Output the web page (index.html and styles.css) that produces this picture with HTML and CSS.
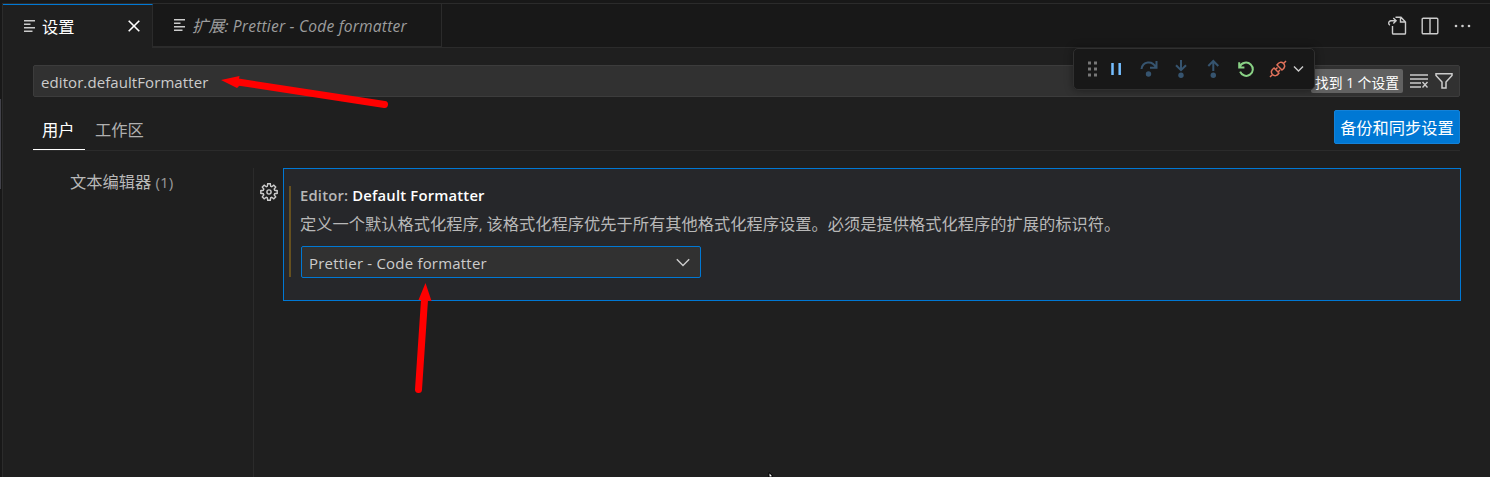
FILE: index.html
```html
<!DOCTYPE html>
<html lang="zh-CN">
<head>
<meta charset="utf-8">
<title>设置</title>
<link rel="stylesheet" href="styles.css">
</head>
<body>
<div class="window">
  <div class="gutter"><div class="gutter-thumb"></div></div>
  <main class="editor">
    <header class="tabbar">
      <div class="tab tab-active">
        <svg class="tab-icon" width="12" height="12" viewBox="0 0 12 12"><path d="M0 .8h11M0 4.300h6.500M0 7.800h11M0 11.200h8.500"/></svg>
        <span class="tab-label">设置</span>
        <svg class="tab-close" width="12" height="12" viewBox="0 0 12 12"><path d="M.7.7l10.600 10.600M11.300.7L.7 11.300"/></svg>
      </div>
      <div class="tab tab-preview">
        <svg class="tab-icon" width="12" height="12" viewBox="0 0 12 12"><path d="M0 .8h11M0 4.300h6.500M0 7.800h11M0 11.200h8.500"/></svg>
        <span class="tab-label">扩展: <span class="latin">Prettier - Code formatter</span></span>
      </div>
      <div class="tab-actions">
        <svg width="20" height="20" viewBox="0 0 20 20"><path d="M5.500 10v7.200c0 .5.300.8.800.8h11.400c.5 0 .8-.300.8-.800V6L14 1.200H8.500M13.500 1.500V6h4.800M8.800 4.800H4a2.300 2.300 0 0 0-2.300 2.400c0 .9.500 1.600 1.300 1.900M6.300 2l2.800 2.800-2.800 2.800"/></svg>
        <svg width="18" height="18" viewBox="0 0 18 18"><rect x="1.200" y="1.200" width="15.600" height="15.600" rx="1"/><path d="M9 1v16"/></svg>
        <svg width="18" height="18" viewBox="0 0 18 18"><g class="dots"><circle cx="3" cy="9" r="1.300"/><circle cx="9.500" cy="9" r="1.300"/><circle cx="16" cy="9" r="1.300"/></g></svg>
      </div>
    </header>
    <section class="settings">
      <div class="search">
        <span class="search-text">editor.defaultFormatter</span>
        <span class="count">找到 1 个设置</span>
        <svg class="clear" width="19" height="16" viewBox="0 0 19 16"><path d="M0 2h18M0 6h18M0 10h11M0 14h11M12.500 9l5 5.500M17.500 9l-5 5.500"/></svg>
        <svg class="filter" width="18" height="18" viewBox="0 0 18 18"><path d="M1 1.700h16v1.800L11 10v6H7v-6L1 3.500z"/></svg>
      </div>
      <div class="scope">
        <span class="scope-item scope-active">用户</span>
        <span class="scope-item">工作区</span>
        <button class="sync">备份和同步设置</button>
      </div>
      <div class="content">
        <nav class="tree">文本编辑器 <span class="tree-count">(1)</span></nav>
        <div class="gear">
          <svg width="18" height="18" viewBox="0 0 18 18"><path d="M7.700.8h2.600l.4 2.500 1 .4 2.100-1.500 1.900 1.900-1.500 2.100.5 1.100 2.500.4v2.600l-2.500.4-.5 1.100 1.500 2.100-1.900 1.900-2.100-1.500-1 .4-.4 2.500H7.700l-.4-2.500-1-.4-2.100 1.500-1.900-1.900 1.500-2.100-.5-1.100-2.500-.4V7.700l2.500-.4.5-1.100-1.500-2.100 1.900-1.900 2.100 1.500 1-.4z"/><circle cx="9" cy="9" r="2.100"/></svg>
        </div>
        <article class="setting">
          <div class="setting-body">
            <h3 class="setting-title"><span class="category">Editor: </span>Default Formatter</h3>
            <p class="description">定义一个默认格式化程序<span class="comma">, </span>该格式化程序优先于所有其他格式化程序设置。必须是提供格式化程序的扩展的标识符。</p>
            <div class="select"><span class="select-text">Prettier - Code formatter</span><svg width="14" height="9" viewBox="0 0 14 9"><path d="M.8 1.200L7 7.500l6.200-6.300"/></svg></div>
          </div>
        </article>
      </div>
    </section>
  </main>
  <div class="debug">
    <svg width="240" height="40" viewBox="0 0 240 40">
      <g class="grip"><path d="M14 14h3M20 14h3M14 20h3M20 20h3M14 26h3M20 26h3"/></g>
      <path class="pause" d="M38.500 14v12M45.700 14v12"/>
      <g class="step"><path d="M67.500 20c1-8 11-9 14.500-1.500M82.500 12v6.800h-6.500"/><circle cx="74.500" cy="25" r="2.700"/>
      <path d="M107 11v10M102 16.200l5 5 5-5"/><circle cx="107" cy="26.300" r="2.700"/>
      <path d="M139.300 22V12M134.300 17l5-5 5 5"/><circle cx="139.300" cy="26.300" r="2.700"/></g>
      <path class="restart" d="M165.200 13.200v5.200h5.200M165.500 18c2.200-5 8-5.600 11.200-2.600a6.600 6.600 0 1 1-10.600 7.300"/>
      <g class="plug"><path d="M196 28l2.500-2.500M209.500 14.500l2.500-2.500M198.500 25.500c-2-2-1.300-4.500 1.500-6.500l5 5c-1.800 3-4.500 3.500-6.500 1.500zM209.500 14.500c2 2 1.300 4.500-1.500 6.500l-5-5c1.800-3 4.500-3.500 6.500-1.500zM201.500 20.500l2-2M204 23l2-2"/></g>
      <path class="chevron" d="M220 17.500l4.500 4.500 4.500-4.500"/>
    </svg>
  </div>
  <svg class="annotations" width="1490" height="477" viewBox="0 0 1490 477">
    <path d="M384.500 104.500L238 82M418.500 389.500L424.500 300"/>
    <path class="head" d="M221 80l18.500-4-.5 3 1 6-3 3zM425.500 283l6 18-13-1z"/>
    <path class="pointer" d="M769 473v4h3v-1.500z"/>
  </svg>
</div>
</body>
</html>
```
FILE: styles.css
```css
* { box-sizing: border-box; }
body { margin: 0; background: #1f1f1f; color: #ccc; font-family: "Open Sans", "Noto Sans CJK SC", sans-serif; font-size: 16.25px; }
svg { display: block; flex: none; fill: none; stroke: #ccc; stroke-width: 1.4; }
.window { position: relative; display: flex; width: 1490px; height: 477px; overflow: hidden; border-top: 3px solid #181818; }
.gutter { width: 3px; border-right: 1px solid #2b2b2b; background: #181818; padding-top: 96px; }
.gutter-thumb { width: 1px; height: 90px; background: #42424a; }
.editor { flex: 1; min-width: 0; }
.tabbar { display: flex; height: 45px; background: #181818; border-top: 1px solid #2b2b2b; border-bottom: 1px solid #2b2b2b; }
.tab { display: flex; align-items: center; height: 44px; border-right: 1px solid #2b2b2b; padding: 0 0 2px 20px; }
.tab-active { width: 150px; background: #1f1f1f; color: #fff; border-top: 1px solid #0078d4; }
.tab-icon { margin-left: 1px; }
.tab-label { margin-left: 6px; white-space: nowrap; }
.tab-close { margin-left: auto; margin-right: 12px; stroke: #fff; stroke-width: 1.6; }
.tab-preview { width: 289px; height: 43px; padding-bottom: 0; color: #9d9d9d; font-style: italic; border-bottom: 1px solid #2b2b2b; }
.tab-preview .latin { font-size: 15.6px; letter-spacing: .2px; }
.tab-actions { display: flex; align-items: center; gap: 14px; margin-left: auto; padding-right: 19px; }
.dots { fill: #ccc; stroke: none; }
.settings { padding: 17px 30px 0; }
.search { display: flex; align-items: center; height: 32px; background: #313131; border: 1px solid #3c3c3c; border-radius: 2px; padding-left: 7px; }
.search-text { font-size: 15px; letter-spacing: .08px; line-height: 30px; padding-top: 2px; }
.count { display: flex; align-items: center; justify-content: flex-end; width: 92px; height: 24px; margin-left: auto; padding: 1px 4px 0 0; background: #616161; color: #fff; border-radius: 2px; font-size: 13.8px; white-space: nowrap; }
.clear { margin-left: 7px; }
.filter { margin: 0 6px; stroke-width: 1.5; }
.scope { display: flex; align-items: flex-start; height: 54px; border-bottom: 1px solid #2b2b2b; }
.scope-item { height: 53px; padding: 21px 0 0 10px; line-height: 24px; color: #b0b0b0; white-space: nowrap; }
.scope-active { width: 52px; padding-left: 9px; color: #fff; border-bottom: 1px solid #fff; }
.sync { width: 126px; height: 34px; margin: 13px 0 0 auto; padding: 0; border: 1px solid #1482d8; border-radius: 2px; background: #0078d4; color: #fff; font: inherit; white-space: nowrap; }
.content { display: flex; height: 309px; margin: 17px -1px 0 0; }
.tree { width: 221px; padding: 2px 0 0 37px; border-right: 1px solid #2b2b2b; color: #b8b8b8; line-height: 24px; white-space: nowrap; }
.tree-count { color: #999; font-size: 15.2px; }
.gear { width: 29px; padding: 15px 0 0 6px; }
.setting { flex: 1; height: 133px; padding: 18px 5px; border: 1px solid #0078d4; background: #26272a; }
.setting-body { height: 91px; padding-left: 9px; border-left: 2px solid #66501e; }
.setting-title { margin: -1px 0 0; font-size: 14.8px; letter-spacing: .19px; line-height: 18px; font-weight: 600; color: #fff; }
.category { color: #b8b8b8; }
.description { margin: 8px 0 10px; line-height: 24px; color: #b8b8b8; white-space: nowrap; }
.comma { font-size: 15px; }
.select { display: flex; align-items: center; justify-content: space-between; width: 400px; height: 32px; margin-left: 1px; padding: 0 10px 0 7px; background: #313131; border: 1px solid #0078d4; border-radius: 2px; }
.select-text { font-size: 15px; letter-spacing: .2px; padding-top: 2px; }
.debug { position: absolute; left: 1073px; top: 45px; width: 242px; height: 42px; background: #181818; border: 1px solid #303030; border-radius: 5px; box-shadow: 0 0 8px rgba(0,0,0,.4); }
.grip { stroke: #777; stroke-width: 3; stroke-dasharray: 3; }
.pause { stroke: #75beff; stroke-width: 2.5; }
.step { stroke: #36546f; stroke-width: 2; }
.step circle { fill: #36546f; stroke: none; }
.restart { stroke: #89d185; stroke-width: 2; }
.plug { stroke: #e2725b; stroke-width: 1.5; }
.annotations { position: absolute; left: 0; top: -3px; stroke: #f00; stroke-width: 7; stroke-linecap: round; pointer-events: none; }
.head { fill: #f00; stroke: none; }
.pointer { fill: #fff; stroke: #000; stroke-width: 1; }
```
